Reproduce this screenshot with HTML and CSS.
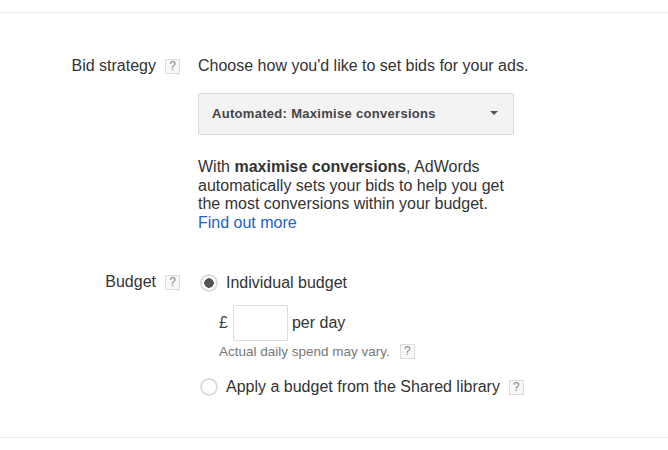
FILE: index.html
```html
<!DOCTYPE html>
<html lang="en">
<head>
    <meta charset="UTF-8">
    <title>Bid strategy and budget</title>
    <link rel="stylesheet" href="styles.css">
</head>
<body>
    <div class="panel">
        <section class="row bid-row">
            <div class="label">Bid strategy <span class="help">?</span></div>
            <div class="field">
                <p class="intro">Choose how you'd like to set bids for your ads.</p>
                <div class="select">
                    <span>Automated: Maximise conversions</span>
                    <i class="arrow"></i>
                </div>
                <p class="desc">With <b>maximise conversions</b>, AdWords automatically sets your bids to help you get the most conversions within your budget.<br><a href="#">Find out more</a></p>
            </div>
        </section>

        <section class="row budget-row">
            <div class="label">Budget <span class="help">?</span></div>
            <div class="field">
                <div class="radio-line">
                    <span class="radio checked"></span>
                    <span>Individual budget</span>
                </div>
                <div class="amount">
                    <span class="currency">£</span>
                    <input type="text" class="amount-input">
                    <span>per day</span>
                </div>
                <div class="note">Actual daily spend may vary. <span class="help">?</span></div>
                <div class="radio-line shared">
                    <span class="radio"></span>
                    <span>Apply a budget from the Shared library</span>
                    <span class="help">?</span>
                </div>
            </div>
        </section>
    </div>
</body>
</html>
```

FILE: styles.css
```css
html, body {
    height: 100%;
}

body {
    margin: 0;
    background: #fff;
    color: #333;
    font-family: "Liberation Sans", Arial, sans-serif;
    font-size: 16px;
    overflow: hidden;
}

.panel {
    margin-top: 12px;
    height: 426px;
    box-sizing: border-box;
    border-top: 1px solid #ebebeb;
    border-bottom: 1px solid #ebebeb;
    padding-top: 44px;
}

.row {
    display: flex;
}

.budget-row {
    margin-top: 41px;
}

.label {
    width: 180px;
    flex: none;
    display: flex;
    justify-content: flex-end;
    align-items: center;
    gap: 9px;
    height: 18px;
    color: #333;
}

.field {
    margin-left: 18px;
}

.help {
    display: inline-block;
    box-sizing: border-box;
    flex: none;
    width: 15px;
    height: 15px;
    border: 1px solid #dcdcdc;
    background: #f8f8f8;
    color: #888;
    font-size: 12px;
    line-height: 13px;
    text-align: center;
}

.intro {
    margin: 0;
    line-height: 18px;
}

.select {
    margin-top: 18px;
    width: 316px;
    height: 42px;
    box-sizing: border-box;
    padding: 0 15px 2px 13px;
    display: flex;
    align-items: center;
    justify-content: space-between;
    background: #f3f3f3;
    border: 1px solid #dcdcdc;
    border-radius: 2px;
    font-size: 13px;
    font-weight: bold;
    color: #444;
    letter-spacing: 0.3px;
}

.arrow {
    width: 0;
    height: 0;
    border-left: 4.5px solid transparent;
    border-right: 4.5px solid transparent;
    border-top: 4.5px solid #555;
}

.desc {
    margin: 23px 0 0;
    width: 316px;
    line-height: 18.5px;
}

.desc a {
    color: #2262c6;
    text-decoration: none;
}

.radio-line {
    display: flex;
    align-items: center;
    height: 20px;
    margin-left: 2px;
}

.radio {
    width: 18px;
    height: 18px;
    box-sizing: border-box;
    flex: none;
    margin-right: 8px;
    border: 2px solid #dcdcdc;
    border-radius: 50%;
    background: #fff;
}

.radio.checked {
    background: radial-gradient(circle, #555 0, #555 4.5px, #fff 5px);
}

.shared .help {
    margin-left: 9px;
}

.amount {
    display: flex;
    align-items: center;
    margin: 12px 0 0 21px;
}

.currency {
    color: #444;
}

.amount-input {
    width: 55px;
    height: 36px;
    box-sizing: border-box;
    margin: 0 4px 0 5px;
    border: 1px solid #dcdcdc;
    border-radius: 2px;
    padding: 0;
    background: #fff;
}

.note {
    margin: 2px 0 0 21px;
    font-size: 13.5px;
    color: #777;
    display: flex;
    align-items: center;
    gap: 10px;
    height: 16px;
}

.shared {
    margin-top: 18px;
}
```
